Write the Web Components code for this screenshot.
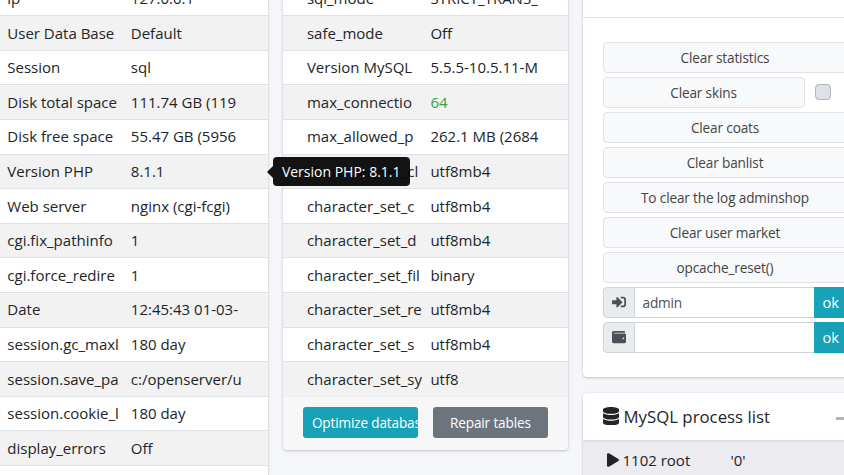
<!DOCTYPE html>
<html><head><meta charset="utf-8">
<style>
html,body{margin:0;height:475px;overflow:hidden;background:#f4f6f9}
body{font-family:"Open Sans","Noto Sans",sans-serif;color:#212529}
x-page{margin-top:-19.3px;margin-left:-16.7px}
</style></head><body>
<x-page>
  <x-card>
    <x-row l="ip" v="127.0.0.1"></x-row>
    <x-row l="User Data Base" v="Default"></x-row>
    <x-row l="Session" v="sql"></x-row>
    <x-row l="Disk total space" v="111.74 GB (119"></x-row>
    <x-row l="Disk free space" v="55.47 GB (5956"></x-row>
    <x-row l="Version PHP" v="8.1.1"></x-row>
    <x-row l="Web server" v="nginx (cgi-fcgi)"></x-row>
    <x-row l="cgi.fix_pathinfo" v="1"></x-row>
    <x-row l="cgi.force_redire" v="1"></x-row>
    <x-row l="Date" v="12:45:43 01-03-"></x-row>
    <x-row l="session.gc_maxl" v="180 day"></x-row>
    <x-row l="session.save_pa" v="c:/openserver/u"></x-row>
    <x-row l="session.cookie_l" v="180 day"></x-row>
    <x-row l="display_errors" v="Off"></x-row>
    <x-row l="" v=""></x-row>
  </x-card>
  <x-card>
    <x-row l="sql_mode" v="STRICT_TRANS_"></x-row>
    <x-row l="safe_mode" v="Off"></x-row>
    <x-row l="Version MySQL" v="5.5.5-10.5.11-M"></x-row>
    <x-row l="max_connectio" v="64" green></x-row>
    <x-row l="max_allowed_p" v="262.1 MB (2684"></x-row>
    <x-row l="character_set_cl" v="utf8mb4"></x-row>
    <x-row l="character_set_c" v="utf8mb4"></x-row>
    <x-row l="character_set_d" v="utf8mb4"></x-row>
    <x-row l="character_set_fil" v="binary"></x-row>
    <x-row l="character_set_re" v="utf8mb4"></x-row>
    <x-row l="character_set_s" v="utf8mb4"></x-row>
    <x-row l="character_set_sy" v="utf8"></x-row>
    <x-footer>
      <x-action color="#17a2b8">Optimize database</x-action>
      <x-action color="#6c757d">Repair tables</x-action>
    </x-footer>
    <x-tip>Version PHP: 8.1.1</x-tip>
  </x-card>
  <x-rightcol>
    <x-panel>
      <x-wide>Clear statistics</x-wide>
      <x-checkline>Clear skins</x-checkline>
      <x-wide>Clear coats</x-wide>
      <x-wide>Clear banlist</x-wide>
      <x-wide>To clear the log adminshop</x-wide>
      <x-wide>Clear user market</x-wide>
      <x-wide>opcache_reset()</x-wide>
      <x-igroup icon="signin" value="admin"></x-igroup>
      <x-igroup icon="wallet" value=""></x-igroup>
    </x-panel>
    <x-process></x-process>
  </x-rightcol>
</x-page>
<script>
const ICONS={
 signin:['0 0 512 512','M416 448h-84c-6.6 0-12-5.4-12-12v-40c0-6.6 5.4-12 12-12h84c17.7 0 32-14.3 32-32V160c0-17.7-14.3-32-32-32h-84c-6.6 0-12-5.4-12-12V76c0-6.6 5.4-12 12-12h84c53 0 96 43 96 96v192c0 53-43 96-96 96zm-47-201L201 79c-15-15-41-4.5-41 17v96H24c-13.3 0-24 10.7-24 24v96c0 13.3 10.7 24 24 24h136v96c0 21.5 26 32 41 17l168-168c9.3-9.4 9.3-24.6 0-34z'],
 wallet:['0 0 512 512','M461.2 128H80c-8.84 0-16-7.16-16-16s7.16-16 16-16h384c8.84 0 16-7.16 16-16 0-26.51-21.49-48-48-48H64C28.65 32 0 60.65 0 96v320c0 35.35 28.65 64 64 64h397.2c28.02 0 50.8-21.53 50.8-48V176c0-26.47-22.78-48-50.8-48zM416 340c-17.67 0-32-14.33-32-32s14.33-32 32-32 32 14.33 32 32-14.33 32-32 32z'],
 db:['0 0 448 512','M448 73.143v45.714C448 159.143 347.667 192 224 192S0 159.143 0 118.857V73.143C0 32.857 100.333 0 224 0s224 32.857 224 73.143zM448 176v102.857C448 319.143 347.667 352 224 352S0 319.143 0 278.857V176c48.125 33.143 136.208 48.572 224 48.572S399.874 209.143 448 176zm0 160v102.857C448 479.143 347.667 512 224 512S0 479.143 0 438.857V336c48.125 33.143 136.208 48.572 224 48.572S399.874 369.143 448 336z'],
 play:['0 0 448 512','M424.4 214.7L72.4 6.6C43.8-10.3 0 6.1 0 47.9V464c0 37.5 40.7 60.1 72.4 41.3l352-208c31.4-18.5 31.5-64.1 0-82.6z']
};
const svg=(n,w,h,c)=>`<svg width="${w}" height="${h}" viewBox="${ICONS[n][0]}" fill="${c}" style="display:block;flex:none"><path d="${ICONS[n][1]}"/></svg>`;
function def(name,css,html){
  customElements.define(name,class extends HTMLElement{
    constructor(){super();this.attachShadow({mode:'open'})}
    connectedCallback(){
      this.shadowRoot.innerHTML=`<style>${css}</style>`+(typeof html==='function'?html(this):html);
    }
  });
}
const FS='15px', BS='font-size:13.6px;letter-spacing:-.15px;';
def('x-page',':host{display:flex;gap:14.6px;align-items:flex-start;width:900px}','<slot></slot>');
def('x-card',':host{display:block;position:relative;flex:none;width:285px;background:#fff;border-radius:4px;box-shadow:0 0 1px rgba(0,0,0,.125),0 1px 3px rgba(0,0,0,.2)}','<slot></slot>');
def('x-row',`:host{display:grid;grid-template-columns:116px 112px;column-gap:7.5px;box-sizing:border-box;height:34.6px;padding-left:24px;align-items:center;border-top:1px solid #dee2e6;font-size:${FS};background:#fff}
:host(:nth-of-type(even)){background:#f2f2f2}
div{white-space:nowrap;line-height:22px;position:relative;top:-.4px;height:22px}
.g{color:#28a745}`,
 e=>`<div>${e.getAttribute('l')}</div><div class="${e.hasAttribute('green')?'g':''}">${e.getAttribute('v')}</div>`);
def('x-footer',':host{display:flex;justify-content:space-between;box-sizing:border-box;height:54.5px;padding:10.5px 20px 0;background:#f7f7f7;border-top:1px solid rgba(0,0,0,.03);border-radius:0 0 4px 4px}','<slot></slot>');
def('x-action',`:host{display:block;box-sizing:border-box;width:115px;height:31px;padding:0 9px;border-radius:3px;color:#fff;line-height:31px;${BS}white-space:nowrap;overflow:hidden;text-align:center}`,
 e=>`<style>:host{background:${e.getAttribute('color')}}</style><slot></slot>`);
def('x-tip',`:host{position:absolute;left:-10px;top:176.3px;box-sizing:border-box;height:29px;padding:0 9px;display:block;background:rgba(0,0,0,.92);color:#fff;border-radius:4px;font-size:14px;line-height:29px;white-space:nowrap}
i{position:absolute;left:-6px;top:8.5px;border:6px solid transparent;border-left:0;border-right-color:rgba(0,0,0,.92)}`,'<i></i><slot></slot>');
def('x-rightcol',':host{display:flex;flex-direction:column;gap:16px;flex:none;width:285px}','<slot></slot>');
def('x-panel',`:host{display:block;background:#fff;border-radius:4px;box-shadow:0 0 1px rgba(0,0,0,.125),0 1px 3px rgba(0,0,0,.2)}
.h{height:36px;border-bottom:1px solid #dee2e6}
.b{display:flex;flex-direction:column;gap:4px;padding:24px 20px}`,'<div class="h"></div><div class="b"><slot></slot></div>');
const btn=`box-sizing:border-box;height:31px;border:1px solid #dfe3e7;border-radius:4px;background:#f8f9fa;color:#444;${BS}line-height:29px;text-align:center;white-space:nowrap`;
def('x-wide',`:host{display:block;${btn}}`,'<slot></slot>');
def('x-checkline',`:host{display:flex;align-items:center;gap:10px}
.b{${btn};width:202px}
.c{box-sizing:border-box;width:16px;height:16px;border:1px solid #adb5bd;border-radius:4px;background:#dee2e6}`,'<div class="b"><slot></slot></div><div class="c"></div>');
def('x-igroup',`:host{display:flex;height:31px;${BS}}
.p{box-sizing:border-box;width:32px;background:#e9ecef;border:1px solid #ced4da;border-radius:4px 0 0 4px;display:flex;align-items:center;justify-content:center}
.i{box-sizing:border-box;width:179px;background:#fff;border:1px solid #ced4da;border-left:0;border-right:0;padding-left:8px;line-height:29px;color:#495057}
.o{flex:1;background:#17a2b8;color:#fff;line-height:31px;padding-left:9px;box-sizing:border-box;font-size:14.6px;letter-spacing:0;border-radius:0 4px 4px 0}`,
 e=>`<div class="p">${svg(e.getAttribute('icon'),14,14,'#495057')}</div><div class="i">${e.getAttribute('value')}</div><div class="o">ok</div>`);
def('x-process',`:host{display:block;background:#fff;border-radius:4px;box-shadow:0 0 1px rgba(0,0,0,.125),0 1px 3px rgba(0,0,0,.2);height:120px;overflow:hidden}
.h{box-sizing:border-box;height:49px;border-bottom:2px solid #dee2e6;padding-left:20px;display:flex;align-items:center;gap:5px;font-size:16.8px;color:#212529;position:relative}
.d{position:absolute;left:253px;top:24px;width:12px;height:3px;background:#adb5bd}
.r{background:#ecebf0;height:70px;padding:8px 0 0 24px;font-size:${FS};display:flex;align-items:flex-start;gap:4px;line-height:20px}
.r svg{margin-top:3px}
.t{width:104px}`,
 ()=>`<div class="h">${svg('db',16,18.3,'#212529')}<span>MySQL process list</span><div class="d"></div></div><div class="r">${svg('play',12,14,'#212529')}<span class="t">1102 root</span><span>'0'</span></div>`);
</script>
</body></html>
